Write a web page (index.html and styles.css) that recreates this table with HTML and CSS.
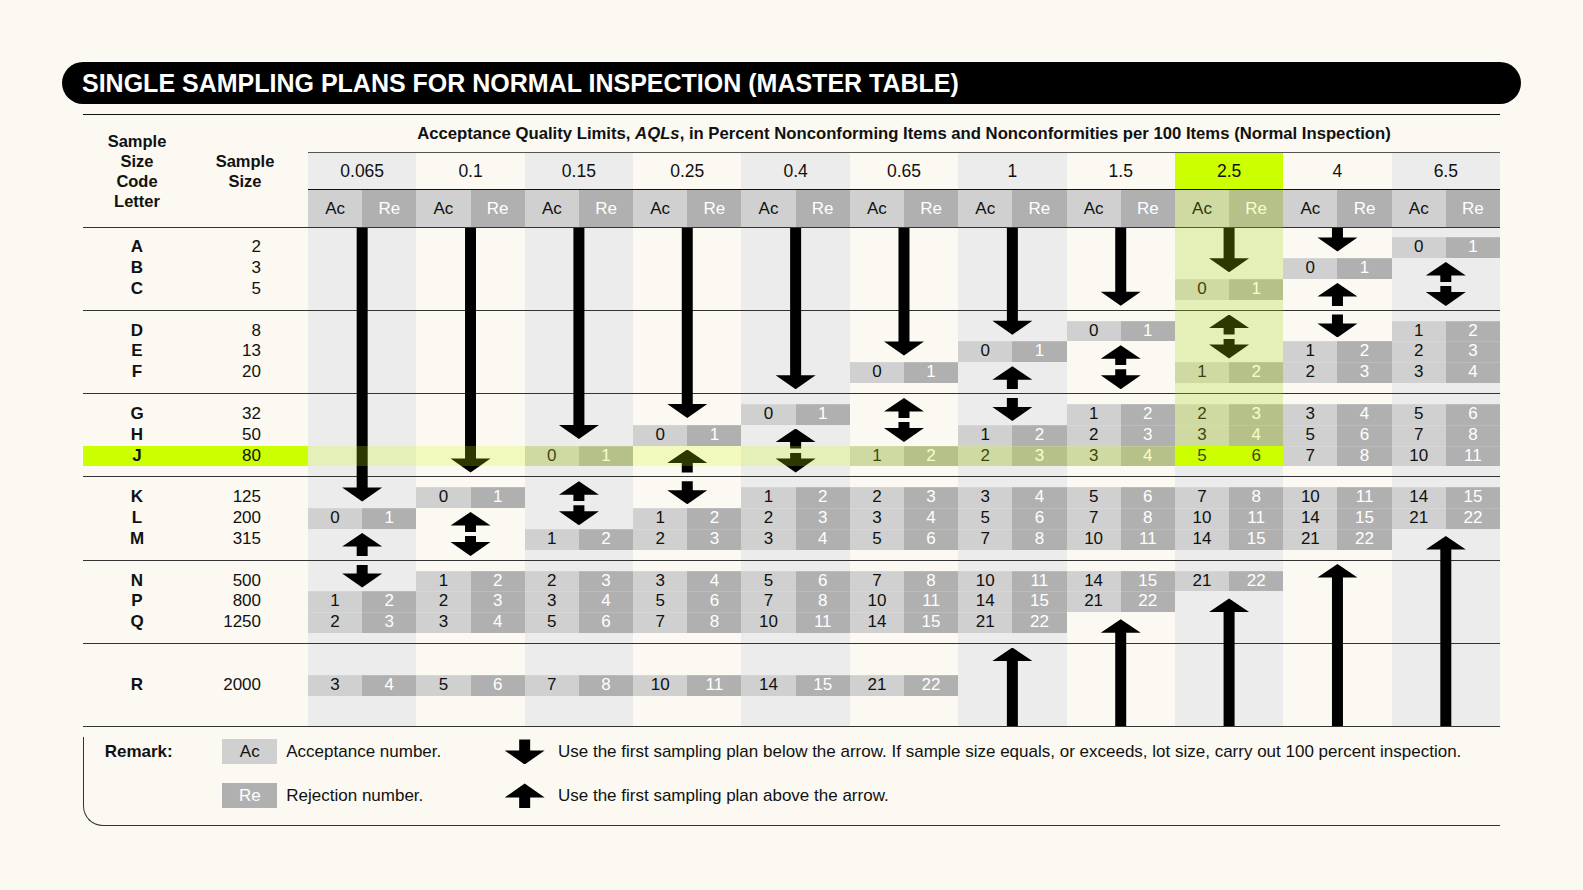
FILE: index.html
```html
<!DOCTYPE html>
<html lang="en">
<head>
<meta charset="utf-8">
<title>Single Sampling Plans for Normal Inspection</title>
<link rel="stylesheet" href="styles.css">
</head>
<body>
<div class="page">
  <h1 class="title">SINGLE SAMPLING PLANS FOR NORMAL INSPECTION (MASTER TABLE)</h1>
  <div class="table">
    <div class="thead">
      <div class="th-code">Sample<br>Size<br>Code<br>Letter</div>
      <div class="th-size">Sample<br>Size</div>
      <div class="th-data">
        <div class="aql-title">Acceptance Quality Limits, <em>AQLs</em>, in Percent Nonconforming Items and Nonconformities per 100 Items (Normal Inspection)</div>
        <div class="aql-row">
          <div>0.065</div><div>0.1</div><div>0.15</div><div>0.25</div><div>0.4</div><div>0.65</div><div>1</div><div>1.5</div><div class="hl">2.5</div><div>4</div><div>6.5</div>
        </div>
        <div class="acre-row">
          <span class="ac">Ac</span><span class="re">Re</span>
          <span class="ac">Ac</span><span class="re">Re</span>
          <span class="ac">Ac</span><span class="re">Re</span>
          <span class="ac">Ac</span><span class="re">Re</span>
          <span class="ac">Ac</span><span class="re">Re</span>
          <span class="ac">Ac</span><span class="re">Re</span>
          <span class="ac">Ac</span><span class="re">Re</span>
          <span class="ac">Ac</span><span class="re">Re</span>
          <span class="ac tint">Ac</span><span class="re tint">Re</span>
          <span class="ac">Ac</span><span class="re">Re</span>
          <span class="ac">Ac</span><span class="re">Re</span>
        </div>
      </div>
    </div>

    <div class="tbody">
      <div class="group">
        <div class="row"><b class="code">A</b><span class="size">2</span>
          <div class="plan c10"><span>0</span><span>1</span></div></div>
        <div class="row"><b class="code">B</b><span class="size">3</span>
          <div class="plan c9"><span>0</span><span>1</span></div></div>
        <div class="row"><b class="code">C</b><span class="size">5</span>
          <div class="plan c8"><span>0</span><span>1</span></div></div>
      </div>
      <div class="group">
        <div class="row"><b class="code">D</b><span class="size">8</span>
          <div class="plan c7"><span>0</span><span>1</span></div>
          <div class="plan c10"><span>1</span><span>2</span></div></div>
        <div class="row"><b class="code">E</b><span class="size">13</span>
          <div class="plan c6"><span>0</span><span>1</span></div>
          <div class="plan c9"><span>1</span><span>2</span></div>
          <div class="plan c10"><span>2</span><span>3</span></div></div>
        <div class="row"><b class="code">F</b><span class="size">20</span>
          <div class="plan c5"><span>0</span><span>1</span></div>
          <div class="plan c8"><span>1</span><span>2</span></div>
          <div class="plan c9"><span>2</span><span>3</span></div>
          <div class="plan c10"><span>3</span><span>4</span></div></div>
      </div>
      <div class="group">
        <div class="row"><b class="code">G</b><span class="size">32</span>
          <div class="plan c4"><span>0</span><span>1</span></div>
          <div class="plan c7"><span>1</span><span>2</span></div>
          <div class="plan c8"><span>2</span><span>3</span></div>
          <div class="plan c9"><span>3</span><span>4</span></div>
          <div class="plan c10"><span>5</span><span>6</span></div></div>
        <div class="row"><b class="code">H</b><span class="size">50</span>
          <div class="plan c3"><span>0</span><span>1</span></div>
          <div class="plan c6"><span>1</span><span>2</span></div>
          <div class="plan c7"><span>2</span><span>3</span></div>
          <div class="plan c8"><span>3</span><span>4</span></div>
          <div class="plan c9"><span>5</span><span>6</span></div>
          <div class="plan c10"><span>7</span><span>8</span></div></div>
        <div class="row sel"><b class="code">J</b><span class="size">80</span>
          <div class="plan c2"><span>0</span><span>1</span></div>
          <div class="plan c5"><span>1</span><span>2</span></div>
          <div class="plan c6"><span>2</span><span>3</span></div>
          <div class="plan c7"><span>3</span><span>4</span></div>
          <div class="plan c8 hit"><span>5</span><span>6</span></div>
          <div class="plan c9"><span>7</span><span>8</span></div>
          <div class="plan c10"><span>10</span><span>11</span></div></div>
      </div>
      <div class="group">
        <div class="row"><b class="code">K</b><span class="size">125</span>
          <div class="plan c1"><span>0</span><span>1</span></div>
          <div class="plan c4"><span>1</span><span>2</span></div>
          <div class="plan c5"><span>2</span><span>3</span></div>
          <div class="plan c6"><span>3</span><span>4</span></div>
          <div class="plan c7"><span>5</span><span>6</span></div>
          <div class="plan c8"><span>7</span><span>8</span></div>
          <div class="plan c9"><span>10</span><span>11</span></div>
          <div class="plan c10"><span>14</span><span>15</span></div></div>
        <div class="row"><b class="code">L</b><span class="size">200</span>
          <div class="plan c0"><span>0</span><span>1</span></div>
          <div class="plan c3"><span>1</span><span>2</span></div>
          <div class="plan c4"><span>2</span><span>3</span></div>
          <div class="plan c5"><span>3</span><span>4</span></div>
          <div class="plan c6"><span>5</span><span>6</span></div>
          <div class="plan c7"><span>7</span><span>8</span></div>
          <div class="plan c8"><span>10</span><span>11</span></div>
          <div class="plan c9"><span>14</span><span>15</span></div>
          <div class="plan c10"><span>21</span><span>22</span></div></div>
        <div class="row"><b class="code">M</b><span class="size">315</span>
          <div class="plan c2"><span>1</span><span>2</span></div>
          <div class="plan c3"><span>2</span><span>3</span></div>
          <div class="plan c4"><span>3</span><span>4</span></div>
          <div class="plan c5"><span>5</span><span>6</span></div>
          <div class="plan c6"><span>7</span><span>8</span></div>
          <div class="plan c7"><span>10</span><span>11</span></div>
          <div class="plan c8"><span>14</span><span>15</span></div>
          <div class="plan c9"><span>21</span><span>22</span></div></div>
      </div>
      <div class="group">
        <div class="row"><b class="code">N</b><span class="size">500</span>
          <div class="plan c1"><span>1</span><span>2</span></div>
          <div class="plan c2"><span>2</span><span>3</span></div>
          <div class="plan c3"><span>3</span><span>4</span></div>
          <div class="plan c4"><span>5</span><span>6</span></div>
          <div class="plan c5"><span>7</span><span>8</span></div>
          <div class="plan c6"><span>10</span><span>11</span></div>
          <div class="plan c7"><span>14</span><span>15</span></div>
          <div class="plan c8"><span>21</span><span>22</span></div></div>
        <div class="row"><b class="code">P</b><span class="size">800</span>
          <div class="plan c0"><span>1</span><span>2</span></div>
          <div class="plan c1"><span>2</span><span>3</span></div>
          <div class="plan c2"><span>3</span><span>4</span></div>
          <div class="plan c3"><span>5</span><span>6</span></div>
          <div class="plan c4"><span>7</span><span>8</span></div>
          <div class="plan c5"><span>10</span><span>11</span></div>
          <div class="plan c6"><span>14</span><span>15</span></div>
          <div class="plan c7"><span>21</span><span>22</span></div></div>
        <div class="row"><b class="code">Q</b><span class="size">1250</span>
          <div class="plan c0"><span>2</span><span>3</span></div>
          <div class="plan c1"><span>3</span><span>4</span></div>
          <div class="plan c2"><span>5</span><span>6</span></div>
          <div class="plan c3"><span>7</span><span>8</span></div>
          <div class="plan c4"><span>10</span><span>11</span></div>
          <div class="plan c5"><span>14</span><span>15</span></div>
          <div class="plan c6"><span>21</span><span>22</span></div></div>
      </div>
      <div class="group single">
        <div class="row"><b class="code">R</b><span class="size">2000</span>
          <div class="plan c0"><span>3</span><span>4</span></div>
          <div class="plan c1"><span>5</span><span>6</span></div>
          <div class="plan c2"><span>7</span><span>8</span></div>
          <div class="plan c3"><span>10</span><span>11</span></div>
          <div class="plan c4"><span>14</span><span>15</span></div>
          <div class="plan c5"><span>21</span><span>22</span></div></div>
      </div>

      <!-- arrows: use first plan below -->
      <div class="arrow down" style="--c:0;--y:275px"></div>
      <div class="arrow down" style="--c:1;--y:246px"></div>
      <div class="arrow down" style="--c:2;--y:212.5px"></div>
      <div class="arrow down" style="--c:3;--y:191.6px"></div>
      <div class="arrow down" style="--c:4;--y:162.7px"></div>
      <div class="arrow down" style="--c:5;--y:129.1px"></div>
      <div class="arrow down" style="--c:6;--y:108.3px"></div>
      <div class="arrow down" style="--c:7;--y:79.3px"></div>
      <div class="arrow down" style="--c:8;--y:45.8px"></div>
      <div class="arrow down" style="--c:9;--y:25px"></div>
      <!-- arrows: use first plan above -->
      <div class="arrow up" style="--c:10;--y:309.4px"></div>
      <div class="arrow up" style="--c:9;--y:337.6px"></div>
      <div class="arrow up" style="--c:8;--y:371.9px"></div>
      <div class="arrow up" style="--c:7;--y:392.75px"></div>
      <div class="arrow up" style="--c:6;--y:421px"></div>
      <!-- short single arrows -->
      <div class="arrow su" style="--c:9;--m:67.9px"></div>
      <div class="arrow su" style="--c:6;--m:151.2px"></div>
      <div class="arrow su" style="--c:3;--m:234.5px"></div>
      <div class="arrow su" style="--c:0;--m:317.9px"></div>
      <div class="arrow sd" style="--c:9;--m:99.4px"></div>
      <div class="arrow sd" style="--c:6;--m:183px"></div>
      <div class="arrow sd" style="--c:3;--m:266.3px"></div>
      <div class="arrow sd" style="--c:0;--m:349.6px"></div>
      <!-- double arrows -->
      <div class="arrow dbl" style="--c:10;--m:57.5px"></div>
      <div class="arrow dbl" style="--c:8;--m:110px"></div>
      <div class="arrow dbl" style="--c:7;--m:140.8px"></div>
      <div class="arrow dbl" style="--c:5;--m:193.4px"></div>
      <div class="arrow dbl" style="--c:4;--m:224.1px"></div>
      <div class="arrow dbl" style="--c:2;--m:276.7px"></div>
      <div class="arrow dbl" style="--c:1;--m:307.5px"></div>

      <div class="ov-col"></div>
    </div>
  </div>

  <div class="remark">
    <b class="rm-label">Remark:</b>
    <span class="badge ac">Ac</span>
    <span class="rm-text">Acceptance number.</span>
    <span class="rm-arrow down"></span>
    <span class="rm-note">Use the first sampling plan below the arrow. If sample size equals, or exceeds, lot size, carry out 100 percent inspection.</span>
    <span class="rm-label"></span>
    <span class="badge re">Re</span>
    <span class="rm-text">Rejection number.</span>
    <span class="rm-arrow up"></span>
    <span class="rm-note">Use the first sampling plan above the arrow.</span>
  </div>
</div>
</body>
</html>
```

FILE: styles.css
```css
* { box-sizing: border-box; }
html, body { margin: 0; }
body {
  background: #fbf9f1;
  font-family: "Liberation Sans", Arial, Helvetica, sans-serif;
  color: #111;
}
.page { width: 1583px; padding: 62px 62px 0; }

.title {
  margin: 0 0 9.5px;
  height: 42px;
  border-radius: 21px;
  background: #000;
  color: #fff;
  font-size: 25px;
  font-weight: 700;
  line-height: 42px;
  padding-left: 20px;
}

.table { margin: 0 21px; border-top: 1px solid #111; }

/* header */
.thead { display: grid; grid-template-columns: 108px 117px 1fr; }
.th-code, .th-size {
  align-self: center;
  text-align: center;
  font-weight: 700;
  font-size: 16.5px;
  line-height: 20px;
}
.th-size { padding-right: 9px; }
.aql-title {
  height: 37px;
  line-height: 37px;
  text-align: center;
  font-weight: 700;
  font-size: 16.7px;
}
.aql-title em { font-style: italic; }
.aql-row {
  display: grid;
  grid-template-columns: repeat(11, 1fr);
  height: 37px;
  border-top: 1px solid #555;
}
.aql-row div { text-align: center; line-height: 36px; font-size: 17.5px; }
.aql-row div:nth-child(odd) { background: #ececec; }
.aql-row div.hl { background: #ccff00; }
.acre-row {
  display: grid;
  grid-template-columns: repeat(22, 1fr);
  height: 38px;
  border-top: 1px solid #111;
}
.acre-row span { text-align: center; line-height: 37px; font-size: 17px; }
.ac { background: #d0d0d0; color: #111; }
.re { background: #b0b0b0; color: #fff; }
.acre-row .ac.tint { background: #cfdaa2; color: #2f380a; }
.acre-row .re.tint { background: #b6c189; color: #f4ffc7; }

/* body */
.tbody {
  position: relative;
  z-index: 0;
  border-bottom: 1px solid #333;
  background-image: repeating-linear-gradient(90deg, #ececec 0 9.0909%, transparent 9.0909% 18.1818%);
  background-size: calc(100% - 225px) 100%;
  background-position: 225px 0;
  background-repeat: no-repeat;
}
.group {
  height: 83.333px;
  border-top: 1px solid #333;
  padding-top: 9.75px;
}
.group.single { padding-top: 30.58px; }
.row {
  position: relative;
  display: grid;
  grid-template-columns: 108px 117px repeat(22, 1fr);
  height: 20.833px;
}
.code {
  grid-column: 1;
  text-align: center;
  font-weight: 700;
  font-size: 17px;
  line-height: 20.833px;
}
.size {
  grid-column: 2;
  text-align: right;
  padding-right: 47px;
  font-size: 17px;
  line-height: 20.833px;
}
.row.sel .code, .row.sel .size { background: #ccff00; }
.row.sel::after {
  content: "";
  position: absolute;
  z-index: 2;
  left: 225px;
  width: calc(9 * 108.3636px);
  top: 0;
  bottom: 0;
  background: rgba(204, 255, 0, 0.22);
}

.plan { display: grid; grid-template-columns: 1fr 1fr; }
.plan span {
  text-align: center;
  font-size: 17px;
  line-height: 20.833px;
  box-shadow: inset 0 1px 0 rgba(255, 255, 255, 0.14);
}
.plan span:first-child { background: #d0d0d0; color: #111; }
.plan span:last-child { background: #b0b0b0; color: #fff; }
.plan.hit span { background: #ccff00; color: #111; box-shadow: none; }

.c0 { grid-column: 3 / span 2; }
.c1 { grid-column: 5 / span 2; }
.c2 { grid-column: 7 / span 2; }
.c3 { grid-column: 9 / span 2; }
.c4 { grid-column: 11 / span 2; }
.c5 { grid-column: 13 / span 2; }
.c6 { grid-column: 15 / span 2; }
.c7 { grid-column: 17 / span 2; }
.c8 { grid-column: 19 / span 2; }
.c9 { grid-column: 21 / span 2; }
.c10 { grid-column: 23 / span 2; }

/* arrows drawn over the grid */
.arrow {
  position: absolute;
  z-index: 1;
  width: 40px;
  left: calc(225px + (var(--c) + 0.5) * 108.3636px - 20px);
  background: #000;
}
.arrow.down { top: 1px; height: calc(var(--y) - 1px); }
.arrow.up { top: var(--y); bottom: 0; }
.arrow.su, .arrow.sd { top: calc(var(--m) - 11.5px); height: 23px; }
.arrow.dbl { top: calc(var(--m) - 22px); height: 44px; background: none; }
.arrow.dbl::before, .arrow.dbl::after {
  content: "";
  position: absolute;
  left: 0;
  width: 40px;
  height: 20px;
  background: #000;
}
.arrow.dbl::before { top: 0; }
.arrow.dbl::after { bottom: 0; }

.arrow.down, .arrow.sd, .arrow.dbl::after {
  clip-path: polygon(14.5px 0, 25.5px 0, 25.5px calc(100% - 14px), 40px calc(100% - 14px), 20px 100%, 0 calc(100% - 14px), 14.5px calc(100% - 14px));
}
.arrow.up, .arrow.su, .arrow.dbl::before {
  clip-path: polygon(20px 0, 40px 13.5px, 25.5px 13.5px, 25.5px 100%, 14.5px 100%, 14.5px 13.5px, 0 13.5px);
}

.ov-col {
  position: absolute;
  z-index: 2;
  left: calc(225px + 8 * 108.3636px);
  width: 108.3636px;
  top: 0;
  height: 219.08px;
  background: rgba(204, 255, 0, 0.22);
}

/* remark */
.remark {
  margin: 9.5px 21px 0;
  height: 89px;
  border-left: 1px solid #333;
  border-bottom: 1px solid #333;
  border-bottom-left-radius: 20px;
  display: grid;
  grid-template-columns: 117.6px 55px 227.4px 40px 1fr;
  grid-template-rows: 25px 25px;
  row-gap: 19px;
  align-items: center;
  padding: 2.5px 0 0 20.7px;
  font-size: 17px;
}
.rm-label { font-weight: 700; }
.badge {
  height: 25px;
  line-height: 25px;
  text-align: center;
  font-size: 17px;
}
.rm-text { padding-left: 9px; }
.rm-note { padding-left: 13.3px; }
.rm-arrow { height: 25px; background: #000; }
.rm-arrow.down {
  clip-path: polygon(14.5px 0, 25.5px 0, 25.5px 11px, 40px 11px, 20px 100%, 0 11px, 14.5px 11px);
}
.rm-arrow.up {
  clip-path: polygon(20px 0, 40px 14px, 25.5px 14px, 25.5px 100%, 14.5px 100%, 14.5px 14px, 0 14px);
}
```
